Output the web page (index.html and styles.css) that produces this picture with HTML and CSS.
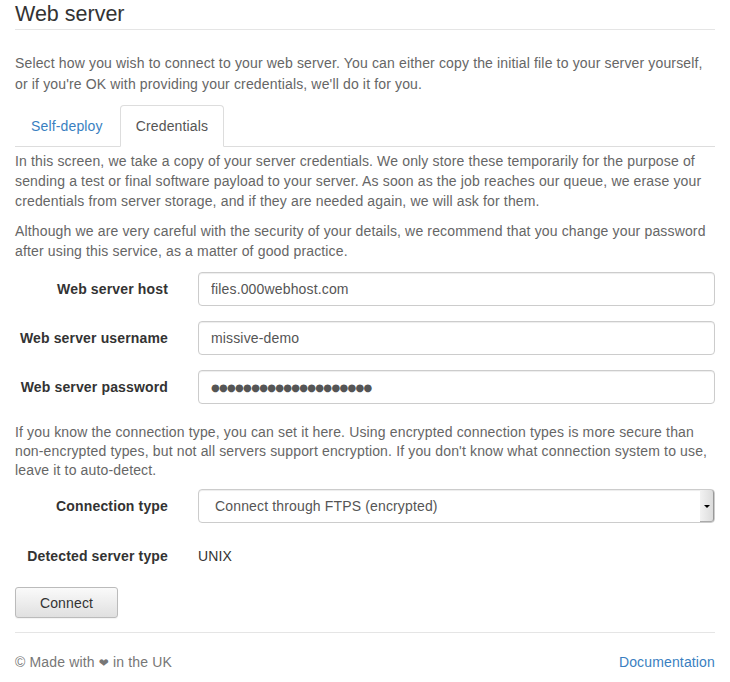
FILE: index.html
```html
<!DOCTYPE html>
<html lang="en">
<head>
<meta charset="utf-8">
<title>Web server</title>
<link rel="stylesheet" href="styles.css">
</head>
<body>
<div class="page">
  <h1 class="title">Web server</h1>
  <p class="intro">Select how you wish to connect to your web server. You can either copy the initial file to your server yourself, or if you're OK with providing your credentials, we'll do it for you.</p>

  <ul class="tabs">
    <li class="tab"><a href="#">Self-deploy</a></li>
    <li class="tab active"><a href="#">Credentials</a></li>
  </ul>

  <p class="text first">In this screen, we take a copy of your server credentials. We only store these temporarily for the purpose of sending a test or final software payload to your server. As soon as the job reaches our queue, we erase your credentials from server storage, and if they are needed again, we will ask for them.</p>
  <p class="text">Although we are very careful with the security of your details, we recommend that you change your password after using this service, as a matter of good practice.</p>

  <form class="form">
    <div class="row">
      <label class="label" for="host">Web server host</label>
      <input class="control" id="host" type="text" value="files.000webhost.com">
    </div>
    <div class="row">
      <label class="label" for="user">Web server username</label>
      <input class="control" id="user" type="text" value="missive-demo">
    </div>
    <div class="row">
      <label class="label" for="pass">Web server password</label>
      <input class="control dots" id="pass" type="text" value="●●●●●●●●●●●●●●●●●●●●">
    </div>

    <p class="text help">If you know the connection type, you can set it here. Using encrypted connection types is more secure than non-encrypted types, but not all servers support encryption. If you don't know what connection system to use, leave it to auto-detect.</p>

    <div class="row">
      <label class="label" for="ctype">Connection type</label>
      <div class="select-wrap">
        <select class="control select" id="ctype">
          <option>Connect through FTPS (encrypted)</option>
        </select>
        <span class="select-arrow"></span>
      </div>
    </div>
    <div class="row static">
      <span class="label">Detected server type</span>
      <span class="value">UNIX</span>
    </div>

    <button class="btn" type="button">Connect</button>
  </form>

  <footer class="footer">
    <span class="made">© Made with <span class="heart">❤</span> in the UK</span>
    <a class="doc" href="#">Documentation</a>
  </footer>
</div>
</body>
</html>
```
FILE: styles.css
```css
* { box-sizing: border-box; }
html, body {
  margin: 0;
  background: #fff;
}
body {
  font-family: "Liberation Sans", Arial, sans-serif;
  font-size: 14px;
  line-height: 20px;
  letter-spacing: 0.15px;
  color: #333;
}
.page {
  width: 730px;
  padding: 2px 15px 0;
}
.title {
  margin: 0;
  font-size: 21.5px;
  line-height: 24px;
  font-weight: normal;
  letter-spacing: 0;
  color: #333;
  padding-bottom: 3px;
  border-bottom: 1px solid #e5e5e5;
}
.intro {
  margin: 23px 0 10px;
  line-height: 21px;
  color: #666;
}
.tabs {
  list-style: none;
  margin: 0;
  padding: 0;
  display: flex;
  border-bottom: 1px solid #ddd;
}
.tab {
  margin-bottom: -1px;
  margin-right: 1px;
}
.tab a {
  display: block;
  padding: 10px 15px;
  line-height: 20px;
  border: 1px solid transparent;
  border-radius: 4px 4px 0 0;
  color: #3a7fc1;
  text-decoration: none;
}
.tab.active a {
  color: #555;
  background: #fff;
  border-color: #ddd #ddd transparent;
}
.text {
  margin: 0 0 10px;
  color: #666;
}
.text.first { margin-top: 4px; }
.help {
  margin: 19px 0 9px;
  line-height: 19px;
}
.form {
  margin: 0;
  padding-top: 1px;
}
.row {
  display: grid;
  grid-template-columns: 153px 1fr;
  column-gap: 30px;
  align-items: center;
  margin-bottom: 15px;
}
.label {
  text-align: right;
  font-weight: bold;
  color: #333;
}
.control {
  display: block;
  width: 100%;
  height: 34px;
  padding: 6px 12px;
  font-family: inherit;
  font-size: 14px;
  line-height: 20px;
  letter-spacing: 0.15px;
  color: #555;
  background: #fff;
  border: 1px solid #ccc;
  border-radius: 4px;
  box-shadow: inset 0 1px 1px rgba(0,0,0,.075);
  outline: none;
}
.dots {
  font-family: "DejaVu Sans", sans-serif;
  font-size: 10px;
  letter-spacing: -0.7px;
}
.select-wrap { position: relative; }
.select {
  -webkit-appearance: none;
  appearance: none;
  padding: 6px 16px;
}
.select-arrow {
  position: absolute;
  right: 1px;
  top: 1px;
  width: 14px;
  height: 32px;
  background: linear-gradient(to right, #f2f2f2, #dcdcdc);
  border-right: 1px solid #999;
  border-bottom: 1px solid #aaa;
  border-radius: 0 3px 3px 0;
}
.select-arrow::after {
  content: "";
  position: absolute;
  left: 4px;
  top: 15px;
  border-left: 3px solid transparent;
  border-right: 3px solid transparent;
  border-top: 3px solid #000;
}
.static {
  margin-top: 23px;
  margin-bottom: 0;
}
.value { color: #333; }
.btn {
  display: block;
  margin-top: 21px;
  width: 103px;
  height: 31px;
  font-family: inherit;
  font-size: 14px;
  letter-spacing: 0.15px;
  color: #333;
  background: linear-gradient(to bottom, #fafafa, #e0e0e0);
  border: 1px solid #bbb;
  border-radius: 3px;
  box-shadow: 0 1px 1px rgba(0,0,0,.05);
}
.footer {
  margin-top: 14px;
  border-top: 1px solid #e5e5e5;
  padding-top: 19px;
  display: flex;
  justify-content: space-between;
  line-height: 20px;
}
.made { color: #777; }
.heart {
  font-family: "DejaVu Sans", sans-serif;
  font-size: 12px;
  color: #777;
}
.doc {
  color: #3a7fc1;
  text-decoration: none;
}
```
